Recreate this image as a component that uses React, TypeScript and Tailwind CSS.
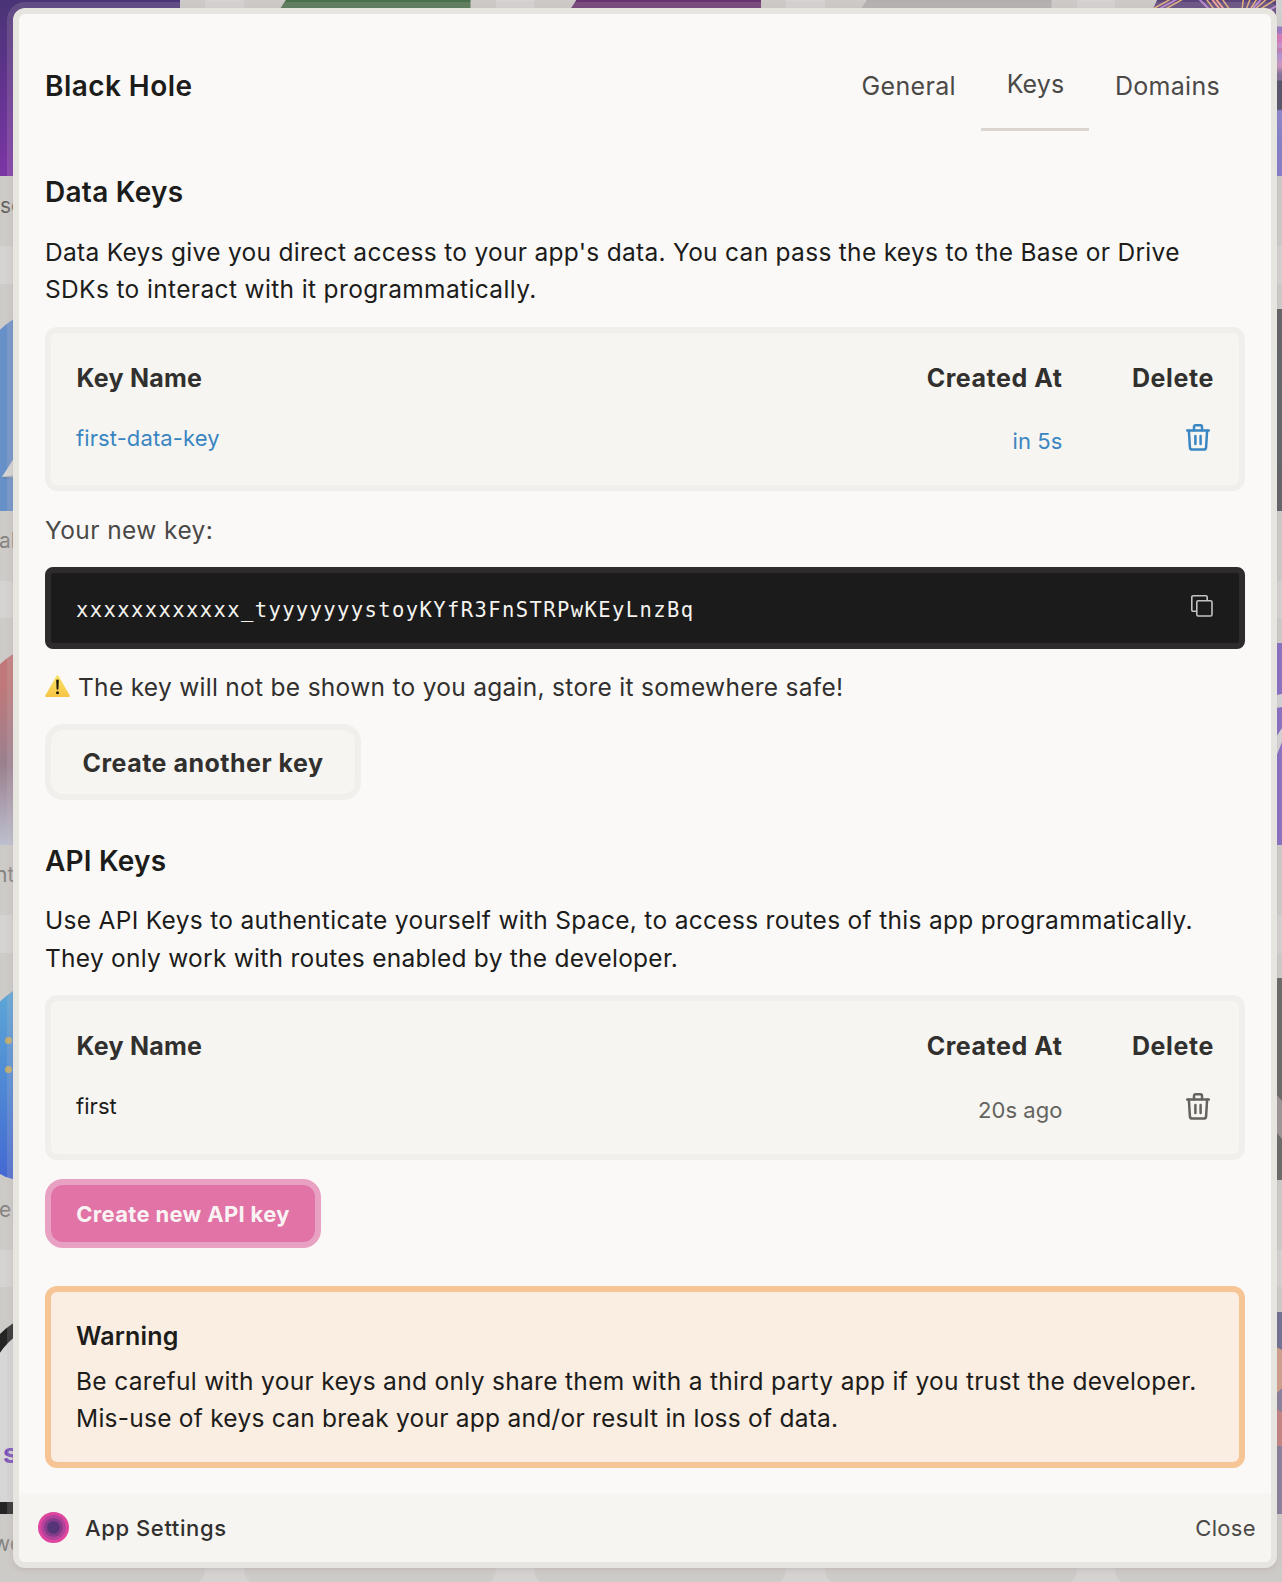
import React from "react";

type Tile = { shape?: string; art?: React.ReactNode; label?: string; labelClass?: string };

function TrashIcon() {
  return (
    <svg width="24" height="27" viewBox="0 0 24 27" fill="none" stroke="currentColor" strokeWidth="2.5" strokeLinecap="round" strokeLinejoin="round">
      <path d="M1.2 6.6H22.8" />
      <path d="M8 6.2V2.9c0-1 .6-1.600 1.600-1.600h4.800c1 0 1.600.6 1.600 1.600v3.300" />
      <path d="M2.900 6.800l1 16.600c.1 1.400 1 2.200 2.300 2.200h11.600c1.300 0 2.200-.8 2.300-2.200l1-16.600" />
      <path d="M9.400 11.900v8M14.600 11.900v8" />
    </svg>
  );
}

function CopyIcon() {
  return (
    <svg width="22" height="22" viewBox="0 0 22 22" fill="none" stroke="#c4c3c1" strokeWidth="1.6" strokeLinejoin="round">
      <path d="M5.700 16.300H2.200c-.9 0-1.400-.5-1.400-1.400V2.200c0-.9.5-1.400 1.400-1.400h12.600c.9 0 1.400.5 1.400 1.400V5.800" />
      <rect x="5.800" y="5.800" width="15.200" height="15.200" rx="1.400" />
    </svg>
  );
}

function WarningGlyph() {
  return (
    <svg width="25" height="22" viewBox="0 0 25 22" className="relative -top-px shrink-0">
      <defs>
        <linearGradient id="warn" x1="0" y1="0" x2="0" y2="1">
          <stop offset="0" stopColor="#fbe36a" />
          <stop offset="1" stopColor="#f6c544" />
        </linearGradient>
      </defs>
      <path d="M11.300 1c.5-.9 1.900-.9 2.400 0l11 19.400c.5.9 0 1.600-1 1.600H1.300c-1 0-1.500-.7-1-1.600z" fill="url(#warn)" />
      <path d="M11.200 5.800c0-1.600 2.600-1.600 2.600 0l-.4 8c-.1 1.300-1.700 1.300-1.800 0z" fill="#1f1a0c" />
      <circle cx="12.500" cy="17.800" r="1.500" fill="#1f1a0c" />
    </svg>
  );
}

function Fireworks() {
  return (
    <svg width="202" height="202" viewBox="0 0 202 202" className="block">
      <path d="M20 20h182v182H0V62z" fill="#5a4379" />
      <path d="M40 20L11 36M52 20L20 38M64 22l12 16M80 22l10 14M104 20l-2 16M112 20l-6 16M120 20l-10 16M130 22l-18 16M144 20l-28 18" stroke="#e3b077" strokeWidth="1.500" />
      <path d="M68 20l14 18M72 20l14 18" stroke="#f0a08c" strokeWidth="2" />
      <path d="M46 20L14 38M58 24l14 14M124 22l-14 16M150 24l-24 14" stroke="#b884cf" strokeWidth="2" />
    </svg>
  );
}

const octagon = "[clip-path:polygon(17%_0,100%_0,100%_100%,0_100%,0_26%)]";

const tiles: Tile[] = [
  { shape: "bg-linear-to-b from-[#4a3477] from-15% via-[#5c3389] via-45% to-[#7b35a5]", label: "sc", labelClass: "pl-[47px] text-[#5f5e5b]" },
  { shape: "bg-[#4a6f4b] " + octagon },
  { shape: "bg-[#68346f] " + octagon },
  { shape: "bg-[#b0afad] " + octagon },
  { art: <Fireworks /> },
  { shape: "bg-[#678fc8] rounded-tl-[73px]", label: "al", labelClass: "pl-[46px] text-[#83827f]" },
  {}, {}, {},
  { shape: "bg-linear-to-b from-[#505156] via-[#4d5555] to-[#505156]" },
  { shape: "bg-linear-to-b from-[#c07878] from-20% via-[#9a808f] via-60% to-[#bcc0cf] rounded-tl-[74px]", label: "nt", labelClass: "pl-[42px] text-[#83827f]" },
  {}, {}, {},
  { shape: "bg-[#7c62c0]" },
  { shape: "bg-linear-to-b from-[#5ca4d6] from-10% to-[#4468d2] rounded-tl-[78px] rounded-bl-[44px]", label: "e.", labelClass: "pl-[46px] text-[#83827f]" },
  {}, {}, {},
  { shape: "bg-[#585957]" },
  { shape: "border-[12px] border-[#242424] bg-[#d6d6d6] rounded-tl-[75px]", label: "we", labelClass: "pl-[40px] text-[#83827f]" },
  {}, {}, {},
  { shape: "bg-[#7a7490]" },
];

function Backdrop() {
  return (
    <div className="absolute inset-0 overflow-hidden bg-[#d4d3d1]">
      <div className="-mt-[51px] -ml-[47px] grid w-[1414px] grid-cols-[repeat(5,252px)] gap-x-[38.500px] gap-y-[37.500px]">
        {tiles.map((t, i) => (
          <div key={i} className="flex h-[297px] flex-col rounded-[14px] bg-[#cccbc7] pt-[25px]">
            <div className={"mx-[25px] h-[202px] w-[202px] shrink-0 " + (t.shape ?? "")}>{t.art}</div>
            {t.label && <div className={"mt-[17px] text-[21px] leading-[26px] " + t.labelClass}>{t.label}</div>}
          </div>
        ))}
      </div>
      {/* Folded paper corner and small details on the icons at the left edge */}
      <svg className="absolute top-[458px] left-0" width="14" height="22" viewBox="0 0 14 22">
        <path d="M2 19L14 0v20z" fill="#d6d5d3" />
        <path d="M2 19l12-1.500v3L4 21z" fill="#4d6f9d" opacity="0.5" />
      </svg>
      <div className="absolute top-[1439px] left-[3px] text-[27px] leading-[30px] font-bold text-[#7450b8]">s</div>
      <div className="absolute top-[1037px] left-[5px] h-[7px] w-[7px] rounded-full bg-[#c2ab68]" />
      <div className="absolute top-[1066px] left-[5px] h-[7px] w-[7px] rounded-full bg-[#c2ab68]" />
      <div className="absolute top-0 right-0 h-[176px] w-[6px] bg-[linear-gradient(180deg,#d0d0d1_0_26px,#8d70c0_27px_33px,#d070b8_34px_42px,#c485c8_44px_48px,#b869a8_49px,#a98bd0_55px,#cc8fbe_66px,#77628f_74px_80px,#40405a_81px_109px,#7f7ccb_111px,#7474c9_140px,#7670c8_176px)]" />
      <svg className="absolute top-[645px] right-0" width="6" height="202" viewBox="0 0 6 202">
        <path d="M0 50l6-1v13l-6 1zM0 92l6-9v14L0 112z" fill="#d4d4d6" />
      </svg>
      <svg className="absolute top-[1094px] right-0" width="6" height="48" viewBox="0 0 6 48">
        <path d="M0 0l6 7v38l-6-7z" fill="#938c8c" />
      </svg>
      <svg className="absolute top-[1312px] right-0" width="6" height="202" viewBox="0 0 6 202">
        <path d="M0 0h6v38l-6-3z" fill="#5e6288" />
        <path d="M0 35l6 3v38l-6 6z" fill="#cf9880" />
        <path d="M0 97l6 3v34H0z" fill="#bf7876" />
      </svg>
    </div>
  );
}

type KeyRow = { name: string; created: string; rowClass: string; nameClass: string; createdClass: string; boxClass: string };

function KeyTable({ row }: { row: KeyRow }) {
  return (
    <div className={"rounded-xl border-6 border-[#f0efeb] bg-[#f6f5f1] pt-[26px] pr-[25px] pl-[25px] " + row.boxClass}>
      <div className="grid h-[39px] grid-cols-[1fr_auto_151.500px] items-center pl-[0.500px] text-[25px] leading-[37px] font-bold text-[#31302e]">
        <span className="tracking-[0.250px]">Key Name</span>
        <span className="tracking-[0.550px]">Created At</span>
        <span className="text-right tracking-[0.600px]">Delete</span>
      </div>
      <div className={"mt-[19px] grid h-[42px] grid-cols-[1fr_auto_151.500px] items-center text-[22px] leading-8 " + row.rowClass}>
        <span className={row.nameClass}>{row.name}</span>
        <span className={"relative " + row.createdClass}>{row.created}</span>
        <button className="relative -top-px mr-[4px] justify-self-end">
          <TrashIcon />
        </button>
      </div>
    </div>
  );
}

export default function App() {
  return (
    <div className="relative h-[1582px] w-[1282px] overflow-hidden font-[Inter,sans-serif] text-[#1c1c1b]">
      <Backdrop />
      <div className="absolute top-2 left-[13px] flex h-[1560px] w-[1264px] flex-col overflow-hidden rounded-xl border-6 border-[#e6e5df] bg-[#faf9f7] shadow-[0_0_0_6px_rgba(205,190,195,0.18),0_2px_3px_rgba(90,70,70,0.1)]">
        <div className="flex h-[1479px] flex-col px-[26px]">
          <header className="mt-[27px] flex h-[90px] justify-between">
            <h1 className="self-center text-[28px] leading-9 font-semibold tracking-[0.450px]">Black Hole</h1>
            <nav className="flex text-[25px] font-[430] text-[#4a4947]">
              <button className="pr-[25px] pl-[27px] pt-[2px] tracking-[0.350px]">General</button>
              <button className="w-[108px] border-b-3 border-[#dad5cf] pt-px pl-px tracking-[0.150px]">Keys</button>
              <button className="w-[156px] pt-[2px] pl-px tracking-[0.300px]">Domains</button>
            </nav>
          </header>

          <h2 className="mt-[43px] text-[28px] leading-9 font-semibold tracking-[0.270px]">Data Keys</h2>
          <p className="mt-[23.500px] text-[24.500px] leading-[37.500px] whitespace-nowrap">
            <span className="block tracking-[0.290px]">Data Keys give you direct access to your app's data. You can pass the keys to the Base or Drive</span>
            <span className="block tracking-[0.360px]">SDKs to interact with it programmatically.</span>
          </p>
          <div className="mt-[18.500px]">
            <KeyTable
              row={{
                name: "first-data-key",
                created: "in 5s",
                rowClass: "text-[#3a86c2]",
                nameClass: "tracking-[0.100px]",
                createdClass: "top-[3px] tracking-[0.100px]",
                boxClass: "h-[164px]",
              }}
            />
          </div>
          <p className="mt-[20px] h-[38px] text-[24.500px] leading-[39px] font-[430] tracking-[0.420px] text-[#4a4947]">Your new key:</p>
          <div className="mt-[18px] flex h-[82px] items-center justify-between rounded-lg border-6 border-[#2d2b2c] bg-[#1b1b1b] pr-[26px] pl-[25px]">
            <code className="pt-[3px] font-['DejaVu_Sans_Mono',monospace] text-[20.500px] leading-[30px] tracking-[1.400px] text-[#f4f3ef]">
              xxxxxxxxxxxx_tyyyyyyystoyKYfR3FnSTRPwKEyLnzBq
            </code>
            <button className="-mt-[5px]">
              <CopyIcon />
            </button>
          </div>
          <p className="mt-[19px] flex h-[38px] items-center gap-[8px] text-[24.500px] leading-[39px] tracking-[0.290px] text-[#31302e]">
            <WarningGlyph />
            <span>The key will not be shown to you again, store it somewhere safe!</span>
          </p>
          <button className="mt-[18px] h-[76px] w-[316px] rounded-[18px] border-6 border-[#f0efeb] bg-[#f6f5f1] pt-px text-[25px] leading-[38px] font-bold tracking-[0.500px] text-[#31302e]">
            Create another key
          </button>

          <h2 className="mt-[43px] text-[28px] leading-9 font-semibold tracking-[0.200px]">API Keys</h2>
          <p className="mt-[23px] text-[24.500px] leading-[37.500px] whitespace-nowrap">
            <span className="block tracking-[0.305px]">Use API Keys to authenticate yourself with Space, to access routes of this app programmatically.</span>
            <span className="block tracking-[0.260px]">They only work with routes enabled by the developer.</span>
          </p>
          <div className="mt-[18px]">
            <KeyTable
              row={{
                name: "first",
                created: "20s ago",
                rowClass: "",
                nameClass: "tracking-[0.050px]",
                createdClass: "top-[4px] tracking-[0.050px] text-[#64635f]",
                boxClass: "h-[165px] [&_button]:top-0 [&_button]:text-[#64635f]",
              }}
            />
          </div>
          <button className="mt-[19px] h-[69px] w-[276px] rounded-[18px] border-6 border-[#e9a1c3] bg-[#e173a6] text-[22px] leading-[32px] font-bold tracking-[0.330px] text-[#faf3f4]">
            Create new API key
          </button>

          <section className="mt-[38px] h-[182px] rounded-xl border-6 border-[#f6c495] bg-[#faede1] pt-[26px] pl-[25px]">
            <h3 className="text-[25px] leading-[37px] font-semibold tracking-[0.150px]">Warning</h3>
            <p className="mt-[7.500px] text-[24.500px] leading-[37.500px] whitespace-nowrap">
              <span className="block tracking-[0.315px]">Be careful with your keys and only share them with a third party app if you trust the developer.</span>
              <span className="block tracking-[0.245px]">Mis-use of keys can break your app and/or result in loss of data.</span>
            </p>
          </section>
        </div>

        <footer className="flex h-[69px] items-center bg-[#f6f5f1] pr-[15px] pl-[19px] text-[22px] leading-8">
          <svg width="31" height="31" viewBox="0 0 31 31">
            <circle cx="15.500" cy="15.500" r="15.500" fill="#dd459f" />
            <circle cx="15.500" cy="15.500" r="12.400" fill="#b3429a" />
            <circle cx="15.500" cy="15.500" r="9.400" fill="#863c8a" />
            <circle cx="15.500" cy="15.500" r="6.300" fill="#553577" />
          </svg>
          <span className="ml-4 font-[450] tracking-[0.600px] text-[#31302e]">App Settings</span>
          <button className="ml-auto tracking-[0.350px] text-[#4a4947]">Close</button>
        </footer>
      </div>
    </div>
  );
}
